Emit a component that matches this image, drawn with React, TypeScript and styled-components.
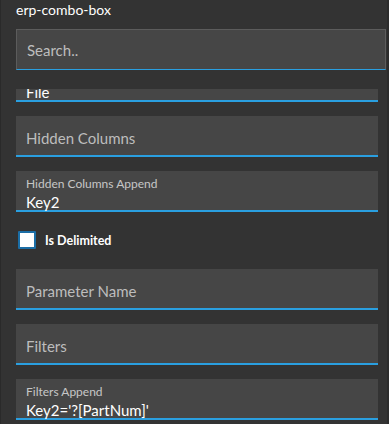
import React, { useEffect, useRef } from 'react';
import styled, { createGlobalStyle } from 'styled-components';

const GlobalStyle = createGlobalStyle`
  html, body {
    margin: 0;
    padding: 0;
    background: #333333;
  }
  body {
    font-family: Lato, "Liberation Sans", sans-serif;
    -webkit-font-smoothing: antialiased;
  }
`;

const Panel = styled.div`
  width: 389px;
  height: 424px;
  box-sizing: border-box;
  background: #333333;
  border-left: 1px solid #2a2a2a;
  border-right: 2px solid #2c2c2c;
  display: flex;
  flex-direction: column;
  overflow: hidden;
`;

const Title = styled.div`
  height: 29px;
  box-sizing: border-box;
  padding: 1px 0 0 15px;
  font-size: 14px;
  color: #ffffff;
`;

const Search = styled.input`
  flex: none;
  margin-left: 15px;
  width: 370px;
  height: 41px;
  box-sizing: border-box;
  border: 1px solid #5c5c5c;
  border-bottom: 1px solid #2a9fe0;
  background: #464646;
  padding: 0 10px;
  font-family: inherit;
  font-size: 15px;
  color: #ffffff;
  outline: none;

  &::placeholder {
    color: #bdbdbd;
  }
`;

const List = styled.div`
  margin-top: 19px;
  flex: 1;
  min-height: 0;
  overflow: hidden;
  padding: 0 9px 40px 15px;
  display: flex;
  flex-direction: column;
  gap: 14px;
`;

const Field = styled.div<{ $filled?: boolean }>`
  flex: none;
  height: 41px;
  box-sizing: border-box;
  background: #464646;
  border-bottom: 2px solid #2a9fe0;
  padding: 0 10px;
  display: flex;
  flex-direction: column;
  justify-content: ${({ $filled }) => ($filled ? 'flex-start' : 'center')};
  padding-top: ${({ $filled }) => ($filled ? '6px' : '5px')};
`;

const Placeholder = styled.span`
  font-size: 15px;
  color: #bdbdbd;
`;

const SmallLabel = styled.span`
  font-size: 12px;
  line-height: 14px;
  color: #c6c6c6;
`;

const Value = styled.span`
  margin-top: 2px;
  font-size: 15px;
  line-height: 18px;
  color: #ffffff;
`;

const CheckRow = styled.label`
  flex: none;
  height: 30px;
  display: flex;
  align-items: center;
  gap: 9px;
  padding-left: 2px;
  margin-top: -1px;
  font-size: 12.5px;
  font-weight: bold;
  color: #ffffff;
`;

const Box = styled.span`
  width: 18px;
  height: 18px;
  box-sizing: border-box;
  border: 2px solid #1b6ea6;
  background: #ffffff;
  border-radius: 1px;
`;

type FieldData = { label: string; value?: string };

const before: FieldData[] = [
  { label: 'Source Type', value: 'File' },
  { label: 'Hidden Columns' },
  { label: 'Hidden Columns Append', value: 'Key2' },
];

const after: FieldData[] = [
  { label: 'Parameter Name' },
  { label: 'Filters' },
  { label: 'Filters Append', value: "Key2='?[PartNum]'" },
];

const FormField = ({ label, value }: FieldData) =>
  value ? (
    <Field $filled>
      <SmallLabel>{label}</SmallLabel>
      <Value>{value}</Value>
    </Field>
  ) : (
    <Field>
      <Placeholder>{label}</Placeholder>
    </Field>
  );

export default function App() {
  const listRef = useRef<HTMLDivElement>(null);

  useEffect(() => {
    if (listRef.current) listRef.current.scrollTop = 28;
  }, []);

  return (
    <>
      <GlobalStyle />
      <Panel>
        <Title>erp-combo-box</Title>
        <Search placeholder="Search.." />
        <List ref={listRef}>
          {before.map((f) => (
            <FormField key={f.label} {...f} />
          ))}
          <CheckRow>
            <Box />
            Is Delimited
          </CheckRow>
          {after.map((f) => (
            <FormField key={f.label} {...f} />
          ))}
        </List>
      </Panel>
    </>
  );
}
